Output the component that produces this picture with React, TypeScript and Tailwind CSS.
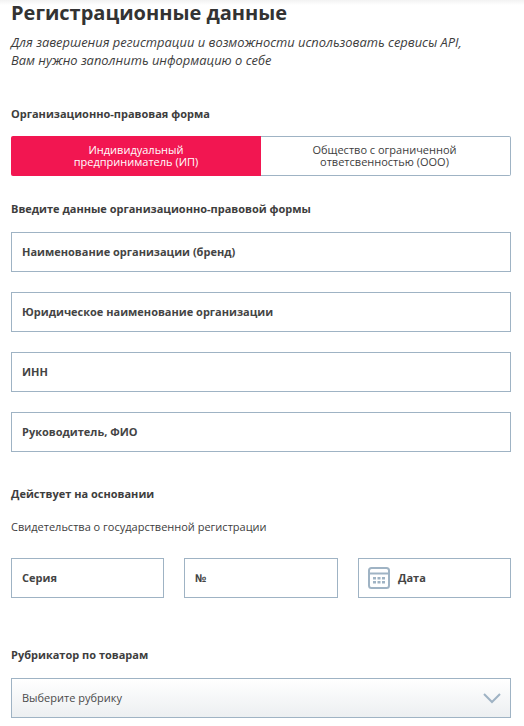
const font = "[font-family:'Open_Sans',sans-serif]"

function Field({ label }: { label: string }) {
  return (
    <div className="flex h-10 items-center border border-[#9fb3c4] bg-white pl-[10px] text-[11px] font-bold text-[#444444]">
      {label}
    </div>
  )
}

function CalendarIcon() {
  return (
    <svg width="22" height="22" viewBox="0 0 22 22" className="shrink-0">
      <rect x="1" y="1" width="20" height="20" rx="2.5" fill="none" stroke="#9fb3c4" strokeWidth="2" />
      <path d="M1 6.5h20" stroke="#9fb3c4" strokeWidth="2" />
      <path d="M5 10h3v2.5H5zM9.5 10h3v2.5h-3zM14 10h3v2.5h-3zM5 14h3v2.5H5zM9.5 14h3v2.5h-3zM14 14h3v2.5h-3z" fill="#9fb3c4" />
    </svg>
  )
}

export default function App() {
  return (
    <div className={`${font} h-[726px] w-[524px] overflow-hidden bg-gradient-to-b from-[#f2f2f2] to-white to-[5px] px-[11px]`}>
      <h1 className="text-[20px] leading-[26px] font-bold text-[#333333]">Регистрационные данные</h1>
      <p className="mt-[7px] text-[12.9px] leading-[18px] text-[#3d3d3d] italic">
        Для завершения регистрации и возможности использовать сервисы API,
        <br />
        Вам нужно заполнить информацию о себе
      </p>

      <div className="mt-[37px] text-[11px] leading-[16px] font-bold text-[#3d3d3d]">Организационно-правовая форма</div>
      <div className="mt-[14px] flex h-10 w-[500px] text-center text-[11px] leading-[12px]">
        <div className="flex w-[250px] items-center justify-center rounded-l-[2px] bg-[#f21651] text-white">
          <span>
            Индивидуальный
            <br />
            предприниматель (ИП)
          </span>
        </div>
        <div className="flex flex-1 items-center justify-center rounded-r-[2px] border border-l-0 border-[#9fb3c4] pr-[2px] text-[#3d3d3d]">
          <span>
            Общество с ограниченной
            <br />
            ответсвенностью (ООО)
          </span>
        </div>
      </div>

      <div className="mt-[25px] text-[11px] leading-[16px] font-bold text-[#3d3d3d]">Введите данные организационно-правовой формы</div>
      <div className="mt-[15px] flex w-[500px] flex-col gap-5">
        <Field label="Наименование организации (бренд)" />
        <Field label="Юридическое наименование организации" />
        <Field label="ИНН" />
        <Field label="Руководитель, ФИО" />
      </div>

      <div className="mt-[34px] text-[11px] leading-[16px] font-bold text-[#3d3d3d]">Действует на основании</div>
      <div className="mt-[17px] text-[11px] leading-[16px] text-[#3d3d3d]">Свидетельства о государственной регистрации</div>

      <div className="mt-[23px] grid w-[500px] grid-cols-[153px_154px_153px] gap-5">
        <Field label="Серия" />
        <Field label="№" />
        <div className="flex h-10 items-center gap-2 border border-[#9fb3c4] pl-[9px] text-[11px] font-bold text-[#444444]">
          <CalendarIcon />
          Дата
        </div>
      </div>

      <div className="mt-[49px] text-[11px] leading-[16px] font-bold text-[#3d3d3d]">Рубрикатор по товарам</div>
      <div className="mt-[15px] flex h-10 w-[500px] items-center justify-between border border-[#9fb3c4] bg-gradient-to-b from-white to-[#eceff1] pr-[9px] pl-[10px] text-[11px] text-[#4a4a4a]">
        Выберите рубрику
        <svg width="18" height="12" viewBox="0 0 18 12">
          <path d="M1 2l8 8 8-8" fill="none" stroke="#9fb3c4" strokeWidth="2" />
        </svg>
      </div>
    </div>
  )
}
